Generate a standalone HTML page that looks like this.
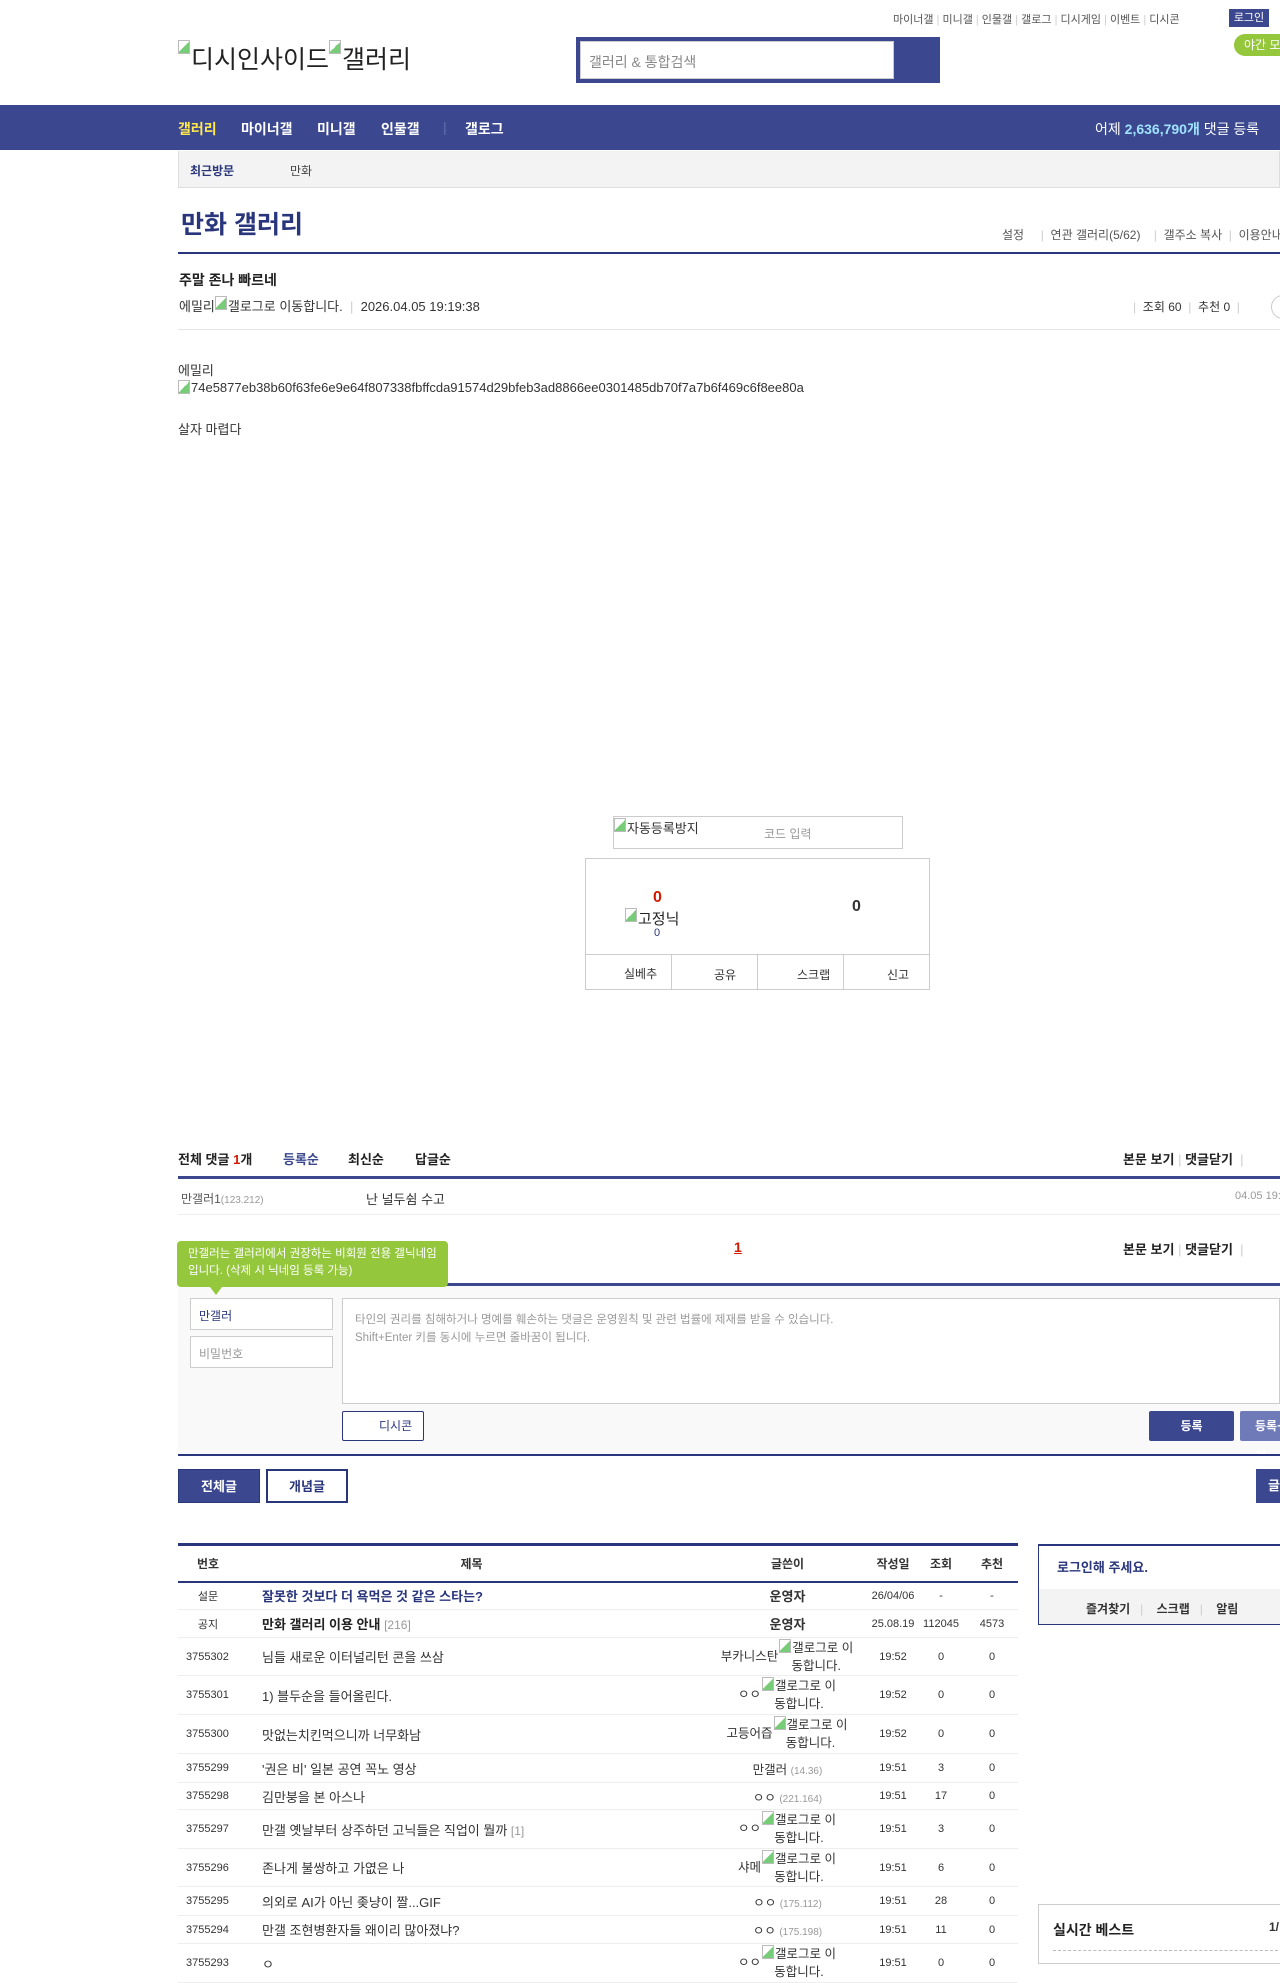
<!DOCTYPE html>
<html><head><meta charset="utf-8">
<style>
*{margin:0;padding:0;box-sizing:border-box}
body{width:1280px;height:1959px;overflow:hidden;position:relative;background:#fff;font-family:"Liberation Sans","Noto Sans CJK KR",sans-serif;color:#333;font-size:12px}
.a{position:absolute;white-space:nowrap}
.blue{color:#29367c}
.nav{position:absolute;left:0;top:105px;width:1280px;height:45px;background:#3b4890}
.nav span{position:absolute;top:14px;color:#fff;font-weight:bold;font-size:14px}
.bi{display:inline-block;width:12px;height:14px;border:1px solid #bbb;vertical-align:top;margin-right:1px;background:linear-gradient(135deg,#fff 50%,#7c7 50%)}
table{border-collapse:collapse;table-layout:fixed}
.list{position:absolute;left:178px;top:1543px;width:840px;border-top:3px solid #29367c}
.list th{height:37px;font-size:12px;color:#333;border-bottom:2px solid #29367c}
.list td{border-bottom:1px solid #eee;font-size:11px;text-align:center;color:#333}
.list td.t{text-align:left;padding-left:24px;font-size:13px}
.list td.n{text-align:left;padding-left:8px}
.ip{color:#999;font-size:10px}
.w{display:inline-block;width:76px;font-size:12.5px;white-space:normal;vertical-align:middle;line-height:18px;text-align:center}
.btn{position:absolute;font-size:13px;font-weight:bold;text-align:center}
</style></head><body>
<!-- top links -->
<div class="a" style="left:893px;top:11px;font-size:11px;color:#555">마이너갤 <span style="color:#ccc">|</span> 미니갤 <span style="color:#ccc">|</span> 인물갤 <span style="color:#ccc">|</span> 갤로그 <span style="color:#ccc">|</span> 디시게임 <span style="color:#ccc">|</span> 이벤트 <span style="color:#ccc">|</span> 디시콘</div>
<div class="a" style="left:1229px;top:9px;width:40px;height:18px;background:#3b4890;color:#fff;font-size:11px;text-align:center;line-height:18px">로그인</div>
<div class="a" style="left:1234px;top:34px;width:60px;height:22px;background:#95c73c;border-radius:11px;color:#fff;font-size:12px;line-height:22px;padding-left:10px">야간 모드</div>
<div class="a" style="left:178px;top:40px;font-size:25px;color:#222"><span class="bi"></span>디시인사이드<span class="bi"></span>갤러리</div>
<div class="a" style="left:576px;top:37px;width:364px;height:46px;background:#3b4890;padding:4px"><div style="width:314px;height:38px;background:#fff;border:1px solid #ccc;font-size:14px;color:#888;padding:10px 8px">갤러리 &amp; 통합검색</div></div>
<div class="nav">
<span style="left:178px;color:#ffe74e">갤러리</span><span style="left:241px">마이너갤</span><span style="left:317px">미니갤</span><span style="left:381px">인물갤</span><span style="left:443px;color:#6670b0;font-weight:normal">|</span><span style="left:465px">갤로그</span>
<span style="left:1095px;font-weight:normal">어제 <b style="color:#9fe2ff">2,636,790개</b> 댓글 등록</span>
</div>
<div class="a" style="left:178px;top:151px;width:1102px;height:37px;background:#f3f3f3;border:1px solid #ddd;border-top:none"></div>
<div class="a" style="left:190px;top:162px;font-weight:bold;color:#29367c">최근방문</div>
<div class="a" style="left:290px;top:162px;color:#444">만화</div>
<div class="a blue" style="left:181px;top:205px;font-size:25px;font-weight:bold">만화 갤러리</div>
<div class="a" style="left:1002px;top:226px;color:#555">설정 &nbsp;&nbsp;&nbsp;&nbsp;<span style="color:#ccc">|</span>&nbsp; 연관 갤러리(5/62) &nbsp;&nbsp;&nbsp;<span style="color:#ccc">|</span>&nbsp; 갤주소 복사 &nbsp;<span style="color:#ccc">|</span>&nbsp; 이용안내</div>
<div class="a" style="left:178px;top:252px;width:1102px;height:2px;background:#29367c"></div>
<div class="a" style="left:179px;top:270px;font-size:14px;font-weight:bold;color:#222">주말 존나 빠르네</div>
<div class="a" style="left:179px;top:296px;font-size:13px;color:#333">에밀리<span class="bi"></span>갤로그로 이동합니다. <span style="color:#ccc">&nbsp;|&nbsp;</span> 2026.04.05 19:19:38</div>
<div class="a" style="left:1133px;top:298px;color:#333"><span style="color:#ccc">|</span>&nbsp; 조회 60 &nbsp;<span style="color:#ccc">|</span>&nbsp; 추천 0 &nbsp;<span style="color:#ccc">|</span></div>
<div class="a" style="left:1271px;top:295px;width:24px;height:24px;border:1px solid #ccc;border-radius:12px"></div>
<div class="a" style="left:178px;top:329px;width:1102px;height:1px;background:#e5e5e5"></div>
<div class="a" style="left:178px;top:360px;font-size:13px">에밀리</div>
<div class="a" style="left:178px;top:380px;font-size:13px"><span class="bi"></span>74e5877eb38b60f63fe6e9e64f807338fbffcda91574d29bfeb3ad8866ee0301485db70f7a7b6f469c6f8ee80a</div>
<div class="a" style="left:178px;top:419px;font-size:13px">살자 마렵다</div>
<!-- captcha -->
<div class="a" style="left:613px;top:816px;width:290px;height:33px;border:1px solid #ccc"></div>
<div class="a" style="left:614px;top:818px;font-size:13px"><span class="bi"></span>자동등록방지</div>
<div class="a" style="left:764px;top:825px;color:#999">코드 입력</div>
<!-- recommend -->
<div class="a" style="left:585px;top:858px;width:345px;height:132px;border:1px solid #ccc"></div>
<div class="a" style="left:585px;top:954px;width:345px;height:1px;background:#ccc"></div>
<div class="a" style="left:671px;top:954px;width:1px;height:35px;background:#ccc"></div>
<div class="a" style="left:757px;top:954px;width:1px;height:35px;background:#ccc"></div>
<div class="a" style="left:843px;top:954px;width:1px;height:35px;background:#ccc"></div>
<div class="a" style="left:653px;top:889px;font-size:16px;font-weight:bold;color:#d31900">0</div>
<div class="a" style="left:625px;top:908px;font-size:15px;color:#222"><span class="bi"></span>고정닉</div>
<div class="a" style="left:654px;top:927px;font-size:11px;color:#29367c">0</div>
<div class="a" style="left:852px;top:898px;font-size:16px;font-weight:bold;color:#333">0</div>
<div class="a" style="left:624px;top:965px;font-size:12px">실베추</div>
<div class="a" style="left:714px;top:966px;font-size:12px">공유</div>
<div class="a" style="left:797px;top:966px;font-size:12px">스크랩</div>
<div class="a" style="left:887px;top:966px;font-size:12px">신고</div>
<!-- comments -->
<div class="a" style="left:178px;top:1149px;font-size:13px;font-weight:bold;color:#222">전체 댓글 <span style="color:#d31900">1</span>개</div>
<div class="a" style="left:283px;top:1149px;font-size:13px;font-weight:bold;color:#3b4890">등록순</div>
<div class="a" style="left:348px;top:1149px;font-size:13px;font-weight:bold;color:#222">최신순</div>
<div class="a" style="left:415px;top:1149px;font-size:13px;font-weight:bold;color:#222">답글순</div>
<div class="a" style="left:1123px;top:1149px;font-size:13px;font-weight:bold;color:#222">본문 보기 <span style="color:#ccc;font-weight:normal">|</span> 댓글닫기 &nbsp;<span style="color:#ccc;font-weight:normal">|</span></div>
<div class="a" style="left:178px;top:1176px;width:1102px;height:3px;background:#3b4890"></div>
<div class="a" style="left:181px;top:1190px;font-size:12px;color:#555">만갤러1<span class="ip">(123.212)</span></div>
<div class="a" style="left:366px;top:1189px;font-size:13px;color:#333">난 널두쉼 수고</div>
<div class="a" style="left:1235px;top:1190px;font-size:11px;color:#999">04.05 19:21</div>
<div class="a" style="left:178px;top:1214px;width:1102px;height:1px;background:#eee"></div>
<div class="a" style="left:734px;top:1239px;font-size:14px;font-weight:bold;color:#d31900;text-decoration:underline">1</div>
<div class="a" style="left:1123px;top:1239px;font-size:13px;font-weight:bold;color:#222">본문 보기 <span style="color:#ccc;font-weight:normal">|</span> 댓글닫기 &nbsp;<span style="color:#ccc;font-weight:normal">|</span></div>
<div class="a" style="left:178px;top:1283px;width:1102px;height:3px;background:#3b4890"></div>
<div class="a" style="left:178px;top:1286px;width:1102px;height:168px;background:#f9f9f9"></div>
<div class="a" style="left:177px;top:1241px;width:271px;height:46px;background:#95c73c;border-radius:4px;color:#fff;font-size:11.5px;line-height:17px;padding:5px 11px;white-space:normal">만갤러는 갤러리에서 권장하는 비회원 전용 갤닉네임입니다. (삭제 시 닉네임 등록 가능)</div>
<div class="a" style="left:210px;top:1287px;width:0;height:0;border-left:6px solid transparent;border-right:6px solid transparent;border-top:8px solid #95c73c"></div>
<div class="a" style="left:190px;top:1298px;width:143px;height:32px;background:#fff;border:1px solid #ccc;padding:8px;font-size:12px;color:#29367c">만갤러</div>
<div class="a" style="left:190px;top:1336px;width:143px;height:32px;background:#fff;border:1px solid #ccc;padding:8px;font-size:12px;color:#999">비밀번호</div>
<div class="a" style="left:342px;top:1298px;width:938px;height:106px;background:#fff;border:1px solid #ccc;padding:12px;font-size:11.5px;line-height:18px;color:#999">타인의 권리를 침해하거나 명예를 훼손하는 댓글은 운영원칙 및 관련 법률에 제재를 받을 수 있습니다.<br>Shift+Enter 키를 동시에 누르면 줄바꿈이 됩니다.</div>
<div class="a" style="left:342px;top:1411px;width:82px;height:30px;background:#fff;border:1px solid #29367c;border-radius:2px;font-size:12px;line-height:28px;padding-left:36px;color:#29367c">디시콘</div>
<div class="btn" style="left:1149px;top:1411px;width:85px;height:30px;background:#3b4890;color:#fff;line-height:30px;font-size:12px;border-radius:2px">등록</div>
<div class="btn" style="left:1240px;top:1411px;width:60px;height:30px;background:#6f7bb8;color:#fff;line-height:30px;font-size:12px;border-radius:2px;text-align:left;padding-left:15px">등록+추천</div>
<div class="a" style="left:178px;top:1454px;width:1102px;height:2px;background:#29367c"></div>
<div class="btn" style="left:178px;top:1469px;width:82px;height:34px;background:#3b4890;color:#fff;line-height:34px;border:1px solid #29367c">전체글</div>
<div class="btn" style="left:266px;top:1469px;width:82px;height:34px;background:#fff;color:#29367c;line-height:32px;border:2px solid #29367c">개념글</div>
<div class="btn" style="left:1256px;top:1469px;width:60px;height:34px;background:#3b4890;color:#fff;line-height:34px">글쓰기</div>
<!-- list -->
<table class="list">
<colgroup><col style="width:60px"><col style="width:467px"><col style="width:165px"><col style="width:46px"><col style="width:50px"><col style="width:52px"></colgroup>
<tr><th>번호</th><th>제목</th><th>글쓴이</th><th>작성일</th><th>조회</th><th>추천</th></tr>
<tr style="height:28px"><td>설문</td><td class="t" style="font-weight:bold;color:#29367c">잘못한 것보다 더 욕먹은 것 같은 스타는?</td><td style="font-weight:bold;font-size:13px">운영자</td><td>26/04/06</td><td>-</td><td>-</td></tr>
<tr style="height:28px"><td>공지</td><td class="t" style="font-weight:bold;color:#222">만화 갤러리 이용 안내 <span class="ip" style="font-weight:normal;font-size:12px">[216]</span></td><td style="font-weight:bold;font-size:13px">운영자</td><td>25.08.19</td><td>112045</td><td>4573</td></tr>
<tr style="height:38px"><td class="n">3755302</td><td class="t">님들 새로운 이터널리턴 콘을 쓰삼</td><td style="font-size:12.5px">부카니스탄<span class="w"><span class="bi"></span>갤로그로 이동합니다.</span></td><td>19:52</td><td>0</td><td>0</td></tr>
<tr style="height:39px"><td class="n">3755301</td><td class="t">1) 블두순을 들어올린다.</td><td style="font-size:12.5px">ㅇㅇ<span class="w"><span class="bi"></span>갤로그로 이동합니다.</span></td><td>19:52</td><td>0</td><td>0</td></tr>
<tr style="height:39px"><td class="n">3755300</td><td class="t">맛없는치킨먹으니까 너무화남</td><td style="font-size:12.5px">고등어즙<span class="w"><span class="bi"></span>갤로그로 이동합니다.</span></td><td>19:52</td><td>0</td><td>0</td></tr>
<tr style="height:29px"><td class="n">3755299</td><td class="t">'권은 비' 일본 공연 꼭노 영상</td><td style="font-size:12.5px">만갤러 <span class="ip">(14.36)</span></td><td>19:51</td><td>3</td><td>0</td></tr>
<tr style="height:27px"><td class="n">3755298</td><td class="t">김만붕을 본 아스나</td><td style="font-size:12.5px">ㅇㅇ <span class="ip">(221.164)</span></td><td>19:51</td><td>17</td><td>0</td></tr>
<tr style="height:39px"><td class="n">3755297</td><td class="t">만갤 옛날부터 상주하던 고닉들은 직업이 뭘까 <span class="ip" style="font-size:12px">[1]</span></td><td style="font-size:12.5px">ㅇㅇ<span class="w"><span class="bi"></span>갤로그로 이동합니다.</span></td><td>19:51</td><td>3</td><td>0</td></tr>
<tr style="height:38px"><td class="n">3755296</td><td class="t">존나게 불쌍하고 가엾은 나</td><td style="font-size:12.5px">샤메<span class="w"><span class="bi"></span>갤로그로 이동합니다.</span></td><td>19:51</td><td>6</td><td>0</td></tr>
<tr style="height:29px"><td class="n">3755295</td><td class="t">의외로 AI가 아닌 좆냥이 짤...GIF</td><td style="font-size:12.5px">ㅇㅇ <span class="ip">(175.112)</span></td><td>19:51</td><td>28</td><td>0</td></tr>
<tr style="height:28px"><td class="n">3755294</td><td class="t">만갤 조현병환자들 왜이리 많아졌냐?</td><td style="font-size:12.5px">ㅇㅇ <span class="ip">(175.198)</span></td><td>19:51</td><td>11</td><td>0</td></tr>
<tr style="height:39px"><td class="n">3755293</td><td class="t">ㅇ</td><td style="font-size:12.5px">ㅇㅇ<span class="w"><span class="bi"></span>갤로그로 이동합니다.</span></td><td>19:51</td><td>0</td><td>0</td></tr>
</table>
<!-- sidebar -->
<div class="a" style="left:1038px;top:1544px;width:260px;height:81px;border:1px solid #29367c;border-top:2px solid #29367c"></div>
<div class="a" style="left:1057px;top:1557px;font-size:13px;font-weight:bold;color:#29367c">로그인해 주세요.</div>
<div class="a" style="left:1039px;top:1589px;width:250px;height:35px;background:#f3f3f3"></div>
<div class="a" style="left:1086px;top:1600px;font-size:12px;font-weight:bold;color:#333">즐겨찾기 &nbsp;&nbsp;<span style="color:#ccc;font-weight:normal">|</span>&nbsp;&nbsp;&nbsp; 스크랩 &nbsp;&nbsp;<span style="color:#ccc;font-weight:normal">|</span>&nbsp;&nbsp;&nbsp; 알림</div>
<div class="a" style="left:1038px;top:1904px;width:260px;height:60px;border:1px solid #ccc"></div>
<div class="a" style="left:1053px;top:1920px;font-size:14px;font-weight:bold;color:#222">실시간 베스트</div>
<div class="a" style="left:1269px;top:1920px;font-size:12px;font-weight:bold">1/</div>
<div class="a" style="left:1053px;top:1950px;width:230px;height:0;border-top:1px dashed #bbb"></div>
</body></html>
